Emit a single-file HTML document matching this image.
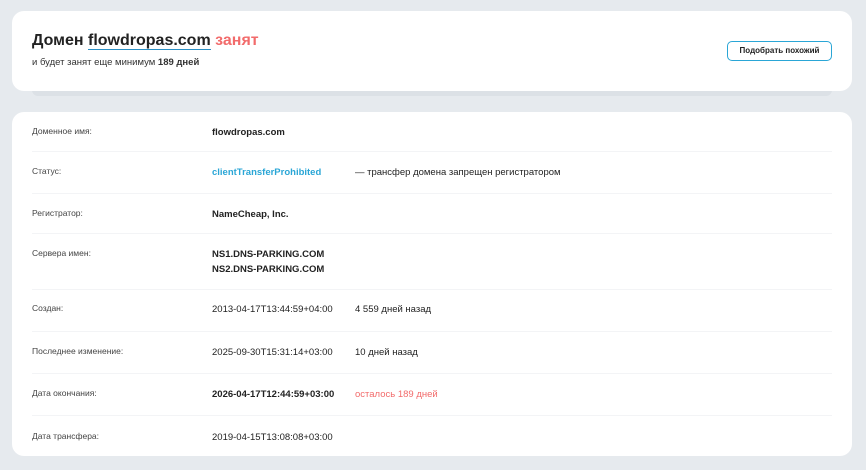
<!DOCTYPE html>
<html><head><meta charset="utf-8"><style>
body{margin:0;width:866px;height:470px;background:#e6eaee;font-family:"Liberation Sans","DejaVu Sans",sans-serif;position:relative;overflow:hidden;color:#222}
.c1{position:absolute;left:12px;top:11px;width:840px;height:80px;background:#fff;border-radius:12px}
.sh{position:absolute;left:32px;top:88px;width:800px;height:8px;background:#dce1e6;border-radius:0 0 6px 6px}
.c2{position:absolute;left:12px;top:112px;width:840px;height:344px;background:#fff;border-radius:12px}
h1{position:absolute;left:32px;top:31px;margin:0;font-size:16px;font-weight:bold;color:#222;line-height:20px}
h1 u{text-decoration:none;border-bottom:1.5px solid #2a8fc4}
h1 span{color:#f26b6b}
.sub{position:absolute;left:32px;top:57px;font-size:9.5px;color:#333}
.btn{position:absolute;left:727px;top:41px;width:103px;height:18px;border:1px solid #2aa6d6;border-radius:5px;font-size:8px;font-weight:bold;text-align:center;line-height:18px;color:#222}
.t{position:absolute;font-size:9.5px;white-space:nowrap}
.l{left:32px;font-size:8.5px;color:#444}
.v{left:212px}
.w{left:355px}
.b{font-weight:bold}
.hr{position:absolute;left:32px;width:800px;height:1px;background:#f3f4f6}
</style></head><body>
<div class="sh"></div>
<div class="c1"></div>
<h1>Домен <u>flowdropas.com</u> <span>занят</span></h1>
<div class="sub">и будет занят еще минимум <b>189 дней</b></div>
<div class="btn">Подобрать похожий</div>
<div class="c2"></div>
<div class="t l" style="top:126px">Доменное имя:</div><div class="t v b" style="top:127px">flowdropas.com</div>
<div class="hr" style="top:151px"></div>
<div class="t l" style="top:166px">Статус:</div><div class="t v b" style="top:167px;color:#2aa6d6">clientTransferProhibited</div><div class="t w" style="top:167px">— трансфер домена запрещен регистратором</div>
<div class="hr" style="top:193px"></div>
<div class="t l" style="top:208px">Регистратор:</div><div class="t v b" style="top:209px">NameCheap, Inc.</div>
<div class="hr" style="top:233px"></div>
<div class="t l" style="top:248px">Сервера имен:</div><div class="t v b" style="top:249px">NS1.DNS-PARKING.COM</div><div class="t v b" style="top:264px">NS2.DNS-PARKING.COM</div>
<div class="hr" style="top:289px"></div>
<div class="t l" style="top:303px">Создан:</div><div class="t v" style="top:304px">2013-04-17T13:44:59+04:00</div><div class="t w" style="top:304px">4 559 дней назад</div>
<div class="hr" style="top:331px"></div>
<div class="t l" style="top:346px">Последнее изменение:</div><div class="t v" style="top:347px">2025-09-30T15:31:14+03:00</div><div class="t w" style="top:347px">10 дней назад</div>
<div class="hr" style="top:373px"></div>
<div class="t l" style="top:388px">Дата окончания:</div><div class="t v b" style="top:389px">2026-04-17T12:44:59+03:00</div><div class="t w" style="top:389px;color:#f26b6b">осталось 189 дней</div>
<div class="hr" style="top:415px"></div>
<div class="t l" style="top:431px">Дата трансфера:</div><div class="t v" style="top:432px">2019-04-15T13:08:08+03:00</div>
</body></html>
